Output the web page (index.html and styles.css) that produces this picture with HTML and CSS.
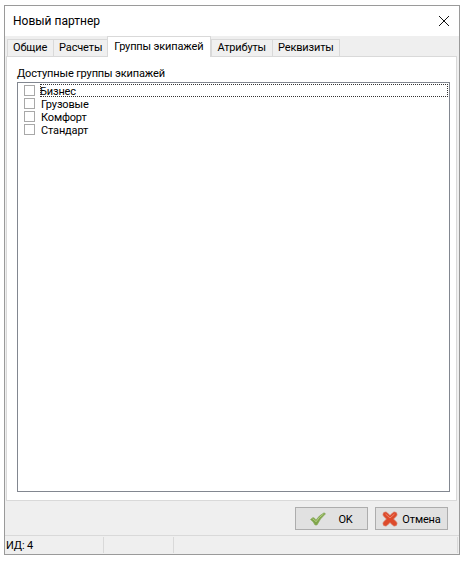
FILE: index.html

```html
<!DOCTYPE html>
<html lang="ru">
<head>
    <meta charset="UTF-8">
    <title>Новый партнер</title>
    <link rel="stylesheet" href="styles.css">
</head>
<body>
    <div class="window">
        <div class="titlebar">
            <span class="title">Новый партнер</span>
            <svg class="close" width="12" height="12" viewBox="0 0 12 12">
                <path d="M1 1 L11 11 M11 1 L1 11" stroke="#111" stroke-width="1" fill="none"/>
            </svg>
        </div>
        <div class="content">
            <div class="tabs">
                <div class="tab tab-first">Общие</div>
                <div class="tab">Расчеты</div>
                <div class="tab tab-active">Группы экипажей</div>
                <div class="tab tab-after">Атрибуты</div>
                <div class="tab">Реквизиты</div>
            </div>
            <div class="tab-page">
                <div class="list-label">Доступные группы экипажей</div>
                <div class="list">
                    <div class="list-row"><span class="check"></span><span class="row-text row-focus">Бизнес</span></div>
                    <div class="list-row"><span class="check"></span><span class="row-text">Грузовые</span></div>
                    <div class="list-row"><span class="check"></span><span class="row-text">Комфорт</span></div>
                    <div class="list-row"><span class="check"></span><span class="row-text">Стандарт</span></div>
                </div>
            </div>
            <div class="buttons">
                <button class="btn btn-ok">
                    <svg width="16" height="14" viewBox="0 0 16 14">
                        <path d="M0.5 7.5 L3 5.5 Q4.5 5.5 6 8 Q9 3.5 14 0.8 L15.5 1.8 Q10 6.5 7 13 L5 13 Q3.5 9.5 0.5 7.5 Z" fill="#7fa548" stroke="#86a75c" stroke-width="0.6" stroke-linejoin="round"/>
                        <path d="M2.5 6.8 Q4.5 7.5 6 9.8 Q9 5 13.5 2" fill="none" stroke="#b4cd86" stroke-width="1"/>
                    </svg>
                    <span class="btn-text">OK</span>
                </button>
                <button class="btn btn-cancel">
                    <svg width="16" height="16" viewBox="0 0 16 16">
                        <path d="M1 3.5 Q1 1 3.5 1 Q4.5 1 5.5 2 L8 4.5 L10.5 2 Q11.5 1 12.5 1 Q15 1 15 3.5 Q15 4.5 14 5.5 L11.5 8 L14 10.5 Q15 11.5 15 12.5 Q15 15 12.5 15 Q11.5 15 10.5 14 L8 11.5 L5.5 14 Q4.5 15 3.5 15 Q1 15 1 12.5 Q1 11.5 2 10.5 L4.5 8 L2 5.5 Q1 4.5 1 3.5 Z" fill="#dd4a2b" stroke="#d8735c" stroke-width="0.7"/>
                        <path d="M3.5 3 L8 7 L12.5 3" fill="none" stroke="#f0876e" stroke-width="1"/>
                    </svg>
                    <span class="btn-text">Отмена</span>
                </button>
            </div>
            <div class="statusbar">
                <div class="status-cell cell-id">ИД: 4</div>
                <div class="status-cell cell-mid"></div>
                <div class="status-cell cell-last"></div>
            </div>
        </div>
    </div>
</body>
</html>
```

FILE: styles.css

```css
* {
    box-sizing: border-box;
    margin: 0;
    padding: 0;
}
body {
    font-family: Roboto, 'Open Sans', sans-serif;
    font-size: 11px;
    letter-spacing: -0.15px;
    color: #000;
    background: #fff;
    width: 465px;
    height: 561px;
    overflow: hidden;
    padding: 5px 5px 6px 4px;
}
/* Window */
.window {
    width: 456px;
    height: 550px;
    border: 1px solid #9a9a9a;
    background: #fff;
    display: flex;
    flex-direction: column;
}
.titlebar {
    height: 30px;
    flex-shrink: 0;
    display: flex;
    align-items: center;
    justify-content: space-between;
    padding: 0 9px 0 8px;
}
.title {
    font-size: 12px;
    letter-spacing: 0;
}
.content {
    flex: 1;
    background: #efefef;
    display: flex;
    flex-direction: column;
    min-height: 0;
}
/* Tabs */
.tabs {
    display: flex;
    height: 20px;
    padding-left: 2px;
    align-items: flex-end;
    flex-shrink: 0;
}
.tab {
    height: 17px;
    line-height: 16px;
    padding: 0 5px;
    border: 1px solid #d9d9d9;
    border-bottom: none;
    margin-left: -1px;
    background: #f0f0f0;
}
.tab-first {
    margin-left: 0;
    padding-right: 6px;
}
.tab-active {
    height: 21px;
    line-height: 19px;
    background: #fff;
    padding: 0 7px 3px 6px;
    position: relative;
    z-index: 1;
    transform: translateY(1px);
}
.tab-after {
    margin-left: 0;
    padding-right: 6px;
}
.tab-page {
    flex: 1;
    margin: 0 2px 0 1px;
    background: #fff;
    border: 1px solid #d9d9d9;
    padding: 8px 6px 8px 10px;
    display: flex;
    flex-direction: column;
    min-height: 0;
}
.list-label {
    height: 17px;
    line-height: 17px;
}
.list {
    flex: 1;
    border: 1px solid #828790;
    padding: 1px;
}
.list-row {
    height: 13px;
    line-height: 13px;
    display: flex;
    align-items: center;
    padding-left: 5px;
}
.row-text {
    flex: 1;
    height: 13px;
    padding: 1px 0 0 1px;
}
.row-focus {
    padding-left: 0;
    outline: 1px dotted #333;
    outline-offset: -1px;
}
.check {
    width: 11px;
    height: 11px;
    border: 1px solid #a8a8a8;
    background: #fff;
    margin-right: 5px;
}
/* Buttons */
.buttons {
    height: 34px;
    flex-shrink: 0;
    display: flex;
    justify-content: flex-end;
    align-items: flex-start;
    gap: 7px;
    padding: 6px 11px 0 0;
}
.btn {
    width: 73px;
    height: 23px;
    border: 1px solid #adadad;
    background: #e1e1e1;
    font: inherit;
    letter-spacing: inherit;
    color: inherit;
    display: flex;
    align-items: center;
    justify-content: center;
}
.btn-text {
    padding-top: 1px;
}
.btn-ok {
    gap: 12px;
}
.btn-cancel {
    gap: 4px;
}
/* Status bar */
.statusbar {
    height: 19px;
    flex-shrink: 0;
    border-top: 1px solid #d9d9d9;
    display: flex;
    align-items: center;
}
.status-cell {
    height: 16px;
    line-height: 18px;
    padding-left: 1px;
}
.cell-id {
    width: 99px;
    border-right: 1px solid #d9d9d9;
}
.cell-mid {
    width: 70px;
    border-right: 1px solid #d9d9d9;
}
.cell-last {
    flex: 1;
    border-right: 1px solid #d9d9d9;
    margin-right: 1px;
}
```
